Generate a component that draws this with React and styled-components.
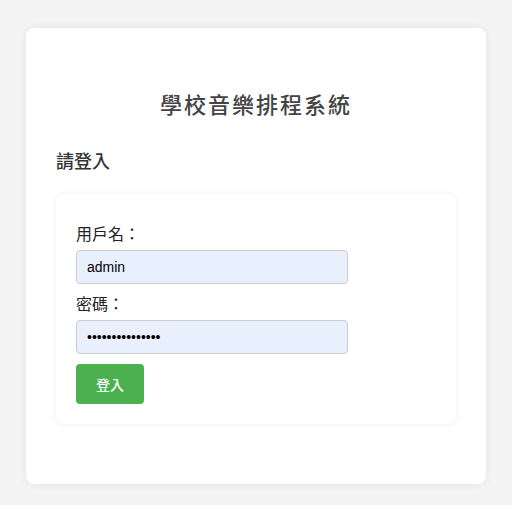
import React from "react";
import styled, { createGlobalStyle } from "styled-components";

const GlobalStyle = createGlobalStyle`
  html, body {
    margin: 0;
    padding: 0;
    background-color: #f4f4f4;
    font-family: "Liberation Sans", "Noto Sans CJK TC", sans-serif;
  }
`;

const Page = styled.div`
  padding: 28px 26px 21px;
`;

const Card = styled.div`
  background-color: #fff;
  border-radius: 8px;
  box-shadow: 0 0 10px rgba(0, 0, 0, 0.08);
  padding: 62px 30px 60px;
`;

const Title = styled.h1`
  margin: 0;
  text-align: center;
  font-size: 22px;
  line-height: 31px;
  font-weight: 500;
  letter-spacing: 2px;
  color: #444;
`;

const SubTitle = styled.h2`
  margin: 28px 0 19px;
  font-size: 18px;
  line-height: 26px;
  font-weight: 500;
  color: #333;
`;

const FormBox = styled.form`
  background-color: #fff;
  border-radius: 8px;
  box-shadow: 0 0 5px rgba(0, 0, 0, 0.08);
  padding: 30px 20px 20px;
`;

const Label = styled.label`
  display: block;
  font-size: 16px;
  line-height: 22px;
  margin-bottom: 4px;
  color: #222;
`;

const Input = styled.input`
  display: block;
  box-sizing: border-box;
  width: 272px;
  height: 34px;
  padding: 0 10px;
  margin: 0 0 10px;
  border: 1px solid #ccc;
  border-radius: 4px;
  background-color: #e8f0fe;
  font-family: "Liberation Sans", sans-serif;
  font-size: 14px;
  color: #000;
  outline: none;
`;

const Button = styled.button`
  display: block;
  box-sizing: border-box;
  height: 40px;
  padding: 0 20px;
  border: none;
  border-radius: 4px;
  background-color: #4caf50;
  color: #fff;
  font-family: "Liberation Sans", "Noto Sans CJK TC", sans-serif;
  font-size: 14px;
  font-weight: 500;
  cursor: pointer;
`;

const App = () => {
  return (
    <div lang="zh-Hant">
      <GlobalStyle />
      <Page>
        <Card>
          <Title>學校音樂排程系統</Title>
          <SubTitle>請登入</SubTitle>
          <FormBox onSubmit={(e) => e.preventDefault()}>
            <Label htmlFor="username">用戶名：</Label>
            <Input id="username" type="text" defaultValue="admin" />
            <Label htmlFor="password">密碼：</Label>
            <Input id="password" type="password" defaultValue="adminpassword12" />
            <Button type="submit">登入</Button>
          </FormBox>
        </Card>
      </Page>
    </div>
  );
};

export default App;
